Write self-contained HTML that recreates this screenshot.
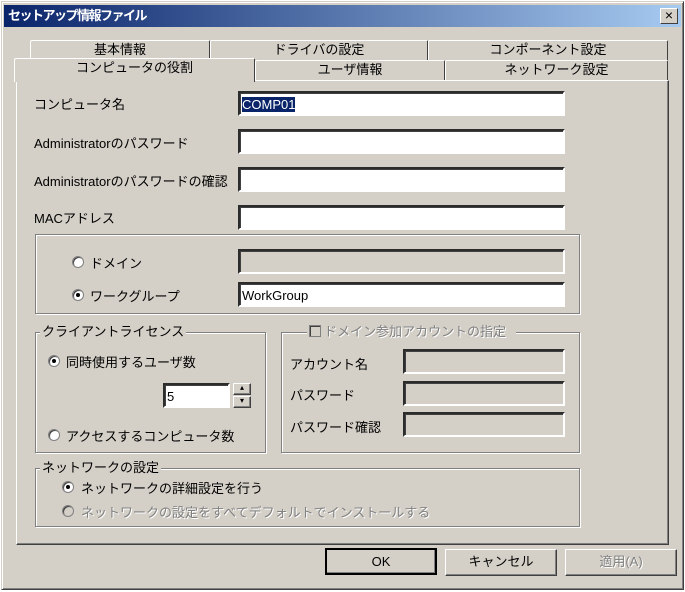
<!DOCTYPE html><html><head><meta charset="utf-8"><style>
*{box-sizing:border-box}
body{margin:0;width:685px;height:592px;background:#fff;font-family:"Liberation Sans","Noto Sans CJK JP",sans-serif;font-size:13px;color:#000;position:relative;overflow:hidden}
.a{position:absolute}
.win{left:1px;top:1px;width:683px;height:589px;background:#d4d0c8;border:1px solid;border-color:#d4d0c8 #404040 #404040 #d4d0c8;box-shadow:inset 1px 1px #fff,inset -1px -1px #808080}
.title{left:4px;top:5px;width:677px;height:22px;background:linear-gradient(90deg,#0a246a,#a6caf0);color:#fff;font-weight:bold;font-size:13px;line-height:22px;padding-left:4px;letter-spacing:-1.5px}
.x{right:3px;top:3px;width:18px;height:16px;background:#d4d0c8;border:1px solid;border-color:#fff #404040 #404040 #fff;color:#000;font-size:14px;line-height:13px;text-align:center;font-weight:normal;letter-spacing:0}
.tab{background:#d4d0c8;border:1px solid;border-bottom:none;border-color:#fff #404040 #404040 #fff;text-align:center;line-height:18px;border-radius:2px 2px 0 0}
.panel{left:16px;top:80px;width:653px;height:465px;border:1px solid;border-color:#fff #404040 #404040 #fff;box-shadow:inset -1px -1px #808080}
.in{background:#fff;border:2px inset #ccc;border-color:#808080 #fff #fff #808080;box-shadow:inset 1px 1px #404040;height:25px;padding:3px 2px;line-height:17px}
.dis{background:#d4d0c8}
.grp{border:1px solid #808080;box-shadow:1px 1px #fff,inset 1px 1px #fff}
.lg{background:#d4d0c8;padding:0 2px;line-height:14px}
.r{width:12px;height:12px;border-radius:50%;background:#fff;border:1px solid #808080;box-shadow:inset 1px 1px #404040}
.r.on::after{content:"";position:absolute;left:3px;top:3px;width:4px;height:4px;border-radius:50%;background:#000}
.btn{border:1px solid;border-color:#fff #404040 #404040 #fff;box-shadow:inset -1px -1px #808080;text-align:center;line-height:24px;height:27px}
.g{color:#808080;text-shadow:1px 1px #fff}
</style></head><body>
<div class="a win"></div>
<div class="a title">セットアップ情報ファイル<div class="a x">×</div></div>
<div class="a tab" style="left:30px;top:40px;width:180px;height:20px">基本情報</div>
<div class="a tab" style="left:210px;top:40px;width:218px;height:20px">ドライバの設定</div>
<div class="a tab" style="left:428px;top:40px;width:240px;height:20px">コンポーネント設定</div>
<div class="a tab" style="left:255px;top:60px;width:190px;height:21px">ユーザ情報</div>
<div class="a tab" style="left:445px;top:60px;width:223px;height:21px">ネットワーク設定</div>
<div class="a panel"></div>
<div class="a tab" style="left:14px;top:58px;width:241px;height:24px;background:#d4d0c8;z-index:2">コンピュータの役割</div>

<div class="a" style="left:34px;top:94px">コンピュータ名</div>
<div class="a in" style="left:238px;top:91px;width:327px"><span style="background:#0a246a;color:#fff">COMP01</span></div>
<div class="a" style="left:34px;top:133px">Administratorのパスワード</div>
<div class="a in" style="left:238px;top:129px;width:327px"></div>
<div class="a" style="left:34px;top:171px">Administratorのパスワードの確認</div>
<div class="a in" style="left:238px;top:167px;width:327px"></div>
<div class="a" style="left:34px;top:208px">MACアドレス</div>
<div class="a in" style="left:238px;top:205px;width:327px"></div>

<div class="a grp" style="left:35px;top:234px;width:545px;height:80px"></div>
<div class="a r" style="left:72px;top:256px"></div><div class="a" style="left:90px;top:253px">ドメイン</div>
<div class="a in dis" style="left:238px;top:249px;width:327px"></div>
<div class="a r on" style="left:72px;top:289px"></div><div class="a" style="left:90px;top:286px">ワークグループ</div>
<div class="a in" style="left:238px;top:282px;width:327px">WorkGroup</div>

<div class="a grp" style="left:35px;top:332px;width:231px;height:121px"></div>
<div class="a lg" style="left:40px;top:325px">クライアントライセンス</div>
<div class="a r on" style="left:48px;top:355px"></div><div class="a" style="left:66px;top:352px">同時使用するユーザ数</div>
<div class="a in" style="left:163px;top:383px;width:67px">5</div>
<div class="a btn" style="left:233px;top:383px;width:18px;height:12px;line-height:8px;font-size:8px">▴</div>
<div class="a btn" style="left:233px;top:396px;width:18px;height:12px;line-height:8px;font-size:8px">▾</div>
<div class="a r" style="left:48px;top:429px"></div><div class="a" style="left:66px;top:426px">アクセスするコンピュータ数</div>

<div class="a grp" style="left:281px;top:332px;width:299px;height:121px"></div>
<div class="a lg g" style="left:307px;top:325px;padding-right:10px"><span style="display:inline-block;width:12px;height:12px;border:1px solid #808080;box-shadow:inset 1px 1px #404040;vertical-align:-1px;margin-right:3px"></span>ドメイン参加アカウントの指定</div>
<div class="a" style="left:290px;top:354px">アカウント名</div>
<div class="a in dis" style="left:403px;top:349px;width:162px"></div>
<div class="a" style="left:290px;top:385px">パスワード</div>
<div class="a in dis" style="left:403px;top:381px;width:162px"></div>
<div class="a" style="left:290px;top:417px">パスワード確認</div>
<div class="a in dis" style="left:403px;top:412px;width:162px"></div>

<div class="a grp" style="left:35px;top:468px;width:545px;height:59px"></div>
<div class="a lg" style="left:40px;top:461px">ネットワークの設定</div>
<div class="a r on" style="left:62px;top:481px"></div><div class="a" style="left:81px;top:478px">ネットワークの詳細設定を行う</div>
<div class="a r" style="left:62px;top:505px;background:#d4d0c8"></div><div class="a g" style="left:81px;top:502px">ネットワークの設定をすべてデフォルトでインストールする</div>

<div class="a btn" style="left:325px;top:548px;width:112px;border:2px solid #000;line-height:23px">OK</div>
<div class="a btn" style="left:445px;top:549px;width:112px">キャンセル</div>
<div class="a btn g" style="left:565px;top:549px;width:112px">適用(A)</div>
</body></html>
